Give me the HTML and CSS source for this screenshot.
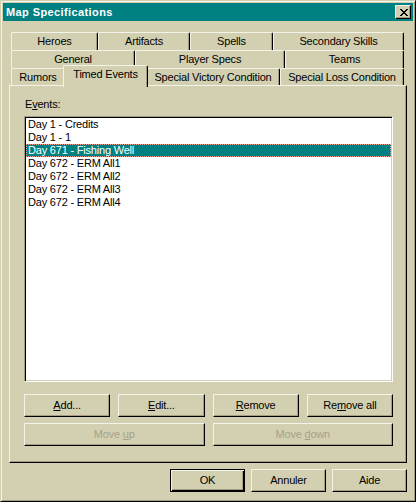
FILE: index.html
```html
<!DOCTYPE html>
<html>
<head>
<meta charset="utf-8">
<link rel="stylesheet" href="styles.css">
</head>
<body>
<div class="window">
  <div class="titlebar">
    <span class="title">Map Specifications</span>
    <div class="close">
      <svg width="8" height="7" viewBox="0 0 8 7" shape-rendering="crispEdges"><path fill="#000" d="M0 0h2v1h-2zM1 1h2v1h-2zM2 2h2v1h-2zM3 3h2v1h-2zM4 4h2v1h-2zM5 5h2v1h-2zM6 6h2v1h-2zM6 0h2v1h-2zM5 1h2v1h-2zM4 2h2v1h-2zM2 4h2v1h-2zM1 5h2v1h-2zM0 6h2v1h-2z"/></svg>
    </div>
  </div>
  <div class="body">
    <div class="tabs">
      <div class="tabrow">
        <div class="tab w87">Heroes</div>
        <div class="tab w92">Artifacts</div>
        <div class="tab w83">Spells</div>
        <div class="tab w131">Secondary Skills</div>
      </div>
      <div class="tabrow">
        <div class="tab w124">General</div>
        <div class="tab w150">Player Specs</div>
        <div class="tab w119">Teams</div>
      </div>
      <div class="tabrow">
        <div class="tab w54">Rumors</div>
        <div class="tab w81 sel">Timed Events</div>
        <div class="tab w134">Special Victory Condition</div>
        <div class="tab w124">Special Loss Condition</div>
      </div>
    </div>
    <div class="panel">
      <div class="label">E<u>v</u>ents:</div>
      <div class="list">
        <div class="item">Day 1 - Credits</div>
        <div class="item">Day 1 - 1</div>
        <div class="item selected">Day 671 - Fishing Well</div>
        <div class="item">Day 672 - ERM All1</div>
        <div class="item">Day 672 - ERM All2</div>
        <div class="item">Day 672 - ERM All3</div>
        <div class="item">Day 672 - ERM All4</div>
      </div>
      <div class="actions">
        <div class="btn"><span><u>A</u>dd...</span></div>
        <div class="btn"><span><u>E</u>dit...</span></div>
        <div class="btn"><span><u>R</u>emove</span></div>
        <div class="btn"><span>Re<u>m</u>ove all</span></div>
        <div class="btn disabled span2"><span>Move <u>u</u>p</span></div>
        <div class="btn disabled span2"><span>Move <u>d</u>own</span></div>
      </div>
    </div>
    <div class="footer">
      <div class="btn fbtn default"><span>OK</span></div>
      <div class="btn fbtn"><span>Annuler</span></div>
      <div class="btn fbtn"><span>Aide</span></div>
    </div>
  </div>
</div>
</body>
</html>
```
FILE: styles.css
```css
html, body {
  margin: 0;
  padding: 0;
  background: #d3d0b2;
}
* { box-sizing: border-box; }

.window {
  width: 416px;
  height: 502px;
  background: #d3d0b2;
  border: 1px solid;
  border-color: #d3d0b2 #000 #000 #d3d0b2;
  box-shadow: inset 1px 1px 0 #f4f3e9, inset -1px -1px 0 #a39e82;
  padding: 2px;
  font-family: "Liberation Sans", Arial, sans-serif;
  font-size: 11px;
  letter-spacing: -0.2px;
  color: #000;
  display: flex;
  flex-direction: column;
}

.titlebar {
  height: 18px;
  background: #008080;
  display: flex;
  align-items: center;
  justify-content: space-between;
  padding: 0 2px 0 3px;
}
.title {
  color: #fff;
  font-weight: bold;
  font-size: 11px;
  letter-spacing: 0.4px;
}
.close {
  width: 16px;
  height: 14px;
  background: #d3d0b2;
  border: 1px solid;
  border-color: #f4f3e9 #000 #000 #f4f3e9;
  box-shadow: inset -1px -1px 0 #a39e82;
  display: flex;
  align-items: center;
  justify-content: center;
}
.close svg { display: block; margin-left: 1px; }

.body {
  padding: 11px 6px 0 6px;
  display: flex;
  flex-direction: column;
}

.tabs {
  padding-left: 2px;
  display: flex;
  flex-direction: column;
}
.tabrow {
  display: flex;
  height: 18px;
}
.tab {
  height: 18px;
  border: 1px solid;
  border-bottom: none;
  border-color: #f4f3e9 #000 #000 #f4f3e9;
  border-radius: 2px 2px 0 0;
  box-shadow: inset -1px 0 0 #a39e82;
  background: #d3d0b2;
  text-align: center;
  line-height: 16px;
  white-space: nowrap;
}
.tab.sel {
  position: relative;
  z-index: 2;
  height: 22px;
  margin: -3px -2px -1px -2px;
}
.w54 { width: 54px; }
.w81 { width: 85px; }
.w83 { width: 83px; }
.w87 { width: 87px; }
.w92 { width: 92px; }
.w119 { width: 119px; }
.w124 { width: 124px; }
.w131 { width: 131px; }
.w134 { width: 134px; }
.w150 { width: 150px; }

.panel {
  position: relative;
  z-index: 1;
  margin-top: -1px;
  height: 378px;
  background: #d3d0b2;
  border: 1px solid;
  border-color: #f4f3e9 #000 #000 #f4f3e9;
  box-shadow: inset -1px -1px 0 #a39e82;
  padding: 12px 13px 0 14px;
  display: flex;
  flex-direction: column;
}
.label {
  line-height: 13px;
  margin-left: 1px;
}
.list {
  margin-top: 5px;
  height: 266px;
  background: #fff;
  border: 1px solid;
  border-color: #a39e82 #fff #fff #a39e82;
  box-shadow: inset 1px 1px 0 #000, inset -1px -1px 0 #d3d0b2;
  padding: 1px;
}
.item {
  height: 13px;
  line-height: 11px;
  border: 1px solid transparent;
  padding-left: 1px;
  white-space: nowrap;
}
.item.selected {
  background: #008080;
  color: #fff;
  border: 1px dotted #e89c8c;
}

.actions {
  margin-top: 12px;
  display: grid;
  grid-template-columns: repeat(4, 1fr);
  column-gap: 8px;
  row-gap: 6px;
}
.span2 { grid-column: span 2; }

.btn {
  height: 23px;
  background: #d3d0b2;
  border: 1px solid;
  border-color: #f4f3e9 #000 #000 #f4f3e9;
  box-shadow: inset -1px -1px 0 #a39e82;
  display: flex;
  align-items: center;
  justify-content: center;
  white-space: nowrap;
}
.btn span { display: block; line-height: 13px; margin-top: -1px; }
.btn.disabled { color: #a6a28a; }

.footer {
  margin-top: 6px;
  display: flex;
  justify-content: flex-end;
  gap: 6px;
}
.fbtn { width: 75px; }
.btn.default {
  border: 1px solid #000;
  box-shadow: inset 1px 1px 0 #f4f3e9, inset -1px -1px 0 #000, inset -2px -2px 0 #a39e82;
}
```
